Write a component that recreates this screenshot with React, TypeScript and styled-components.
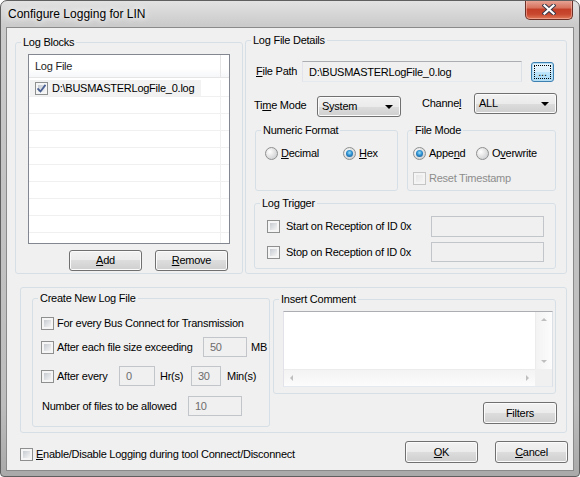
import React from "react";
import styled, { createGlobalStyle } from "styled-components";

const GlobalStyle = createGlobalStyle`
  html, body { margin: 0; padding: 0; background: #fff; }
  body {
    font-family: "Liberation Sans", Arial, sans-serif;
    font-size: 11px;
    letter-spacing: -0.25px;
    color: #000;
  }
  * { box-sizing: border-box; }
`;

const Window = styled.div`
  width: 580px;
  height: 477px;
  display: flex;
  flex-direction: column;
  border: 1px solid #5f5f5f;
  border-radius: 7px 7px 4px 4px;
  background: linear-gradient(#e2e2e2, #cbcbcb 24px, #c3c3c3 40%, #bdbdbd 85%, #a9a9a9);
  overflow: hidden;
`;

const TitleBar = styled.div`
  height: 26px;
  flex: none;
  display: flex;
  align-items: flex-start;
  padding-left: 7px;
`;

const Title = styled.div`
  flex: 1;
  align-self: center;
  font-size: 12px;
  letter-spacing: 0;
  text-shadow: 0 0 6px #fff, 0 0 10px #fff;
`;

const CloseButton = styled.div`
  width: 48px;
  height: 20px;
  margin: -1px 6px 0 0;
  border: 1px solid #6d3026;
  border-top: none;
  border-radius: 0 0 5px 5px;
  background: linear-gradient(#e9a99b, #d7745f 40%, #c43f27 50%, #c8472f 75%, #e07a58);
  box-shadow: inset 0 0 0 1px rgba(255, 200, 190, 0.5);
  display: flex;
  align-items: center;
  justify-content: center;
`;

const Client = styled.div`
  flex: 1;
  margin: 0 5px 5px;
  border: 1px solid #8a8a8a;
  background: #f0f0f0;
  display: flex;
  flex-direction: column;
`;

const TopRow = styled.div`
  display: flex;
  align-items: flex-start;
  gap: 2px;
  padding: 6px 0 0 8px;
`;

const Group = styled.fieldset<{ $w: number; $h: number; $mt?: number; $ml?: number }>`
  flex: none;
  width: ${(p) => p.$w}px;
  height: ${(p) => p.$h}px;
  margin: ${(p) => p.$mt ?? 0}px 0 0 ${(p) => p.$ml ?? 0}px;
  padding: 0;
  min-width: 0;
  border: 1px solid #d5dfe5;
  border-radius: 3px;
`;

const Caption = styled.legend`
  margin-left: 5px;
  padding: 0 2px;
  height: 13px;
  line-height: 13px;
`;

const Body = styled.div<{ $pt?: number; $pl?: number }>`
  display: flex;
  flex-direction: column;
  align-items: flex-start;
  padding: ${(p) => p.$pt ?? 0}px 0 0 ${(p) => p.$pl ?? 0}px;
`;

const Row = styled.div<{ $mt?: number; $h?: number; $center?: boolean }>`
  display: flex;
  align-items: ${(p) => (p.$center ? "center" : "flex-start")};
  margin-top: ${(p) => p.$mt ?? 0}px;
  height: ${(p) => (p.$h ? `${p.$h}px` : "auto")};
`;

const Label = styled.span<{ $w?: number; $ml?: number; $mt?: number; $disabled?: boolean }>`
  flex: none;
  width: ${(p) => (p.$w ? `${p.$w}px` : "auto")};
  margin-left: ${(p) => p.$ml ?? 0}px;
  margin-top: ${(p) => p.$mt ?? 0}px;
  line-height: 13px;
  white-space: nowrap;
  color: ${(p) => (p.$disabled ? "#8d8d8d" : "#000")};
`;

/* list view */
const ListView = styled.div`
  width: 202px;
  height: 190px;
  border: 1px solid #828790;
  background: #fff;
  overflow: hidden;
  display: flex;
  flex-direction: column;
`;

const ListHeader = styled.div`
  flex: none;
  height: 23px;
  display: flex;
  border-bottom: 1px solid #e5e5e5;
  background: linear-gradient(#fff 60%, #f6f7f9);
`;

const HeaderCell = styled.div`
  width: 192px;
  border-right: 1px solid #e5e5e5;
  padding-left: 6px;
  display: flex;
  align-items: center;
  color: #1e1e1e;
`;

const ListBody = styled.div`
  padding-top: 2px;
  display: flex;
  flex-direction: column;
`;

const ListRow = styled.div`
  flex: none;
  height: 17px;
  display: flex;
  border-bottom: 1px solid #f0f0f0;
`;

const ListCell = styled.div`
  width: 192px;
  border-right: 1px solid #f0f0f0;
  display: flex;
  align-items: stretch;
`;

const Item = styled.div`
  margin-left: 1px;
  padding: 0 7px 0 5px;
  display: flex;
  align-items: center;
  gap: 4px;
  background: #f2f2f2;
`;

/* controls */
const Button = styled.div<{ $w: number; $h?: number; $ml?: number; $mt?: number; $mr?: number; $focus?: boolean }>`
  flex: none;
  width: ${(p) => p.$w}px;
  height: ${(p) => p.$h ?? 21}px;
  margin: ${(p) => p.$mt ?? 0}px ${(p) => p.$mr ?? 0}px 0 ${(p) => p.$ml ?? 0}px;
  border: 1px solid ${(p) => (p.$focus ? "#3c7fb1" : "#707070")};
  border-radius: 3px;
  background: ${(p) =>
    p.$focus
      ? "linear-gradient(#eaf6fd, #d9f0fc 50%, #bee6fd 50%, #a7d9f5)"
      : "linear-gradient(#f2f2f2, #ebebeb 50%, #dddddd 50%, #cfcfcf)"};
  box-shadow: inset 0 0 0 1px ${(p) => (p.$focus ? "#b4dcf2" : "#fbfbfb")};
  display: flex;
  align-items: center;
  justify-content: center;
  padding: 2px;
`;

const PushRight = styled.div`
  margin-left: auto;
  display: flex;
`;

const FocusRect = styled.span`
  flex: 1;
  align-self: stretch;
  border: 1px dotted #000;
  display: flex;
  align-items: flex-end;
  justify-content: center;
  line-height: 12px;
`;

const Edit = styled.div<{ $w: number; $h?: number; $ml?: number; $mt?: number; $disabled?: boolean }>`
  flex: none;
  width: ${(p) => p.$w}px;
  height: ${(p) => p.$h ?? 20}px;
  margin-left: ${(p) => p.$ml ?? 0}px;
  margin-top: ${(p) => p.$mt ?? 0}px;
  border: 1px solid;
  border-color: ${(p) => (p.$disabled ? "#c2c6ca" : "#abadb3 #dbdfe6 #e3e9ef #e2e3ea")};
  background: #f0f0f0;
  color: ${(p) => (p.$disabled ? "#6d6d6d" : "#000")};
  display: flex;
  align-items: center;
  padding-left: 6px;
  white-space: nowrap;
`;

const Combo = styled.div<{ $w: number; $ml?: number; $mt?: number }>`
  flex: none;
  width: ${(p) => p.$w}px;
  height: 21px;
  margin-left: ${(p) => p.$ml ?? 0}px;
  margin-top: ${(p) => p.$mt ?? 0}px;
  border: 1px solid #707070;
  border-radius: 3px;
  background: linear-gradient(#f2f2f2, #ebebeb 50%, #dddddd 50%, #cfcfcf);
  box-shadow: inset 0 0 0 1px #fbfbfb;
  display: flex;
  align-items: center;
  justify-content: space-between;
  padding: 0 7px 0 4px;
`;

const Arrow = styled.span`
  width: 0;
  height: 0;
  border-left: 4px solid transparent;
  border-right: 4px solid transparent;
  border-top: 4px solid #000;
`;

const Check = styled.span<{ $disabled?: boolean }>`
  flex: none;
  width: 13px;
  height: 13px;
  border: 1px solid ${(p) => (p.$disabled ? "#c5c5c5" : "#8e8f8f")};
  padding: 2px;
  background: ${(p) =>
    p.$disabled
      ? "linear-gradient(135deg, #e6e6e6, #f4f4f4) content-box, #f4f4f4"
      : "linear-gradient(135deg, #c6cbd1, #f4f4f4) content-box, #f5f5f5"};
  display: flex;
  align-items: center;
  justify-content: center;
  position: relative;
`;

const CheckItem = styled.div<{ $w?: number; $ml?: number; $mt?: number }>`
  flex: none;
  display: flex;
  align-items: center;
  gap: 3px;
  width: ${(p) => (p.$w ? `${p.$w}px` : "auto")};
  margin-left: ${(p) => p.$ml ?? 0}px;
  margin-top: ${(p) => p.$mt ?? 0}px;
  white-space: nowrap;
`;

const Radio = styled.span<{ $on?: boolean }>`
  flex: none;
  width: 13px;
  height: 13px;
  border-radius: 50%;
  border: 1px solid #8e8f8f;
  background: radial-gradient(circle at 35% 35%, #ffffff, #e4e4e4 45%, #c3c6ca);
  display: flex;
  align-items: center;
  justify-content: center;
  &::after {
    content: "";
    display: ${(p) => (p.$on ? "block" : "none")};
    width: 7px;
    height: 7px;
    border-radius: 50%;
    background: radial-gradient(circle at 50% 40%, #9ee2fb, #2d8fd0 45%, #0c4c85);
  }
`;

const BottomFrame = styled.div`
  margin: 13px 0 0 13px;
  width: 547px;
  height: 146px;
  border: 1px solid #d5dfe5;
  border-radius: 3px;
  display: flex;
  align-items: flex-start;
`;

const Column = styled.div<{ $ml?: number; $mt?: number }>`
  display: flex;
  flex-direction: column;
  align-items: flex-end;
  margin-left: ${(p) => p.$ml ?? 0}px;
  margin-top: ${(p) => p.$mt ?? 0}px;
`;

const CommentBox = styled.div`
  width: 270px;
  height: 76px;
  border: 1px solid;
  border-color: #abadb3 #dbdfe6 #e3e9ef #e2e3ea;
  background: #fff;
  display: grid;
  grid-template-columns: 1fr 17px;
  grid-template-rows: 1fr 17px;
`;

const VScroll = styled.div`
  grid-column: 2;
  grid-row: 1;
  background: linear-gradient(90deg, #f3f3f3, #fcfcfc);
  border-left: 1px solid #ececec;
  display: flex;
  flex-direction: column;
  justify-content: space-between;
  align-items: center;
  padding: 6px 0;
`;

const HScroll = styled.div`
  grid-column: 1;
  grid-row: 2;
  background: linear-gradient(#f3f3f3, #fcfcfc);
  border-top: 1px solid #ececec;
  display: flex;
  justify-content: space-between;
  align-items: center;
  padding: 0 6px;
`;

const Corner = styled.div`
  grid-column: 2;
  grid-row: 2;
  background: #f0f0f0;
`;

const Tri = styled.span<{ $dir: "up" | "down" | "left" | "right" }>`
  width: 0;
  height: 0;
  border: 3px solid transparent;
  ${(p) =>
    p.$dir === "up"
      ? "border-bottom: 3px solid #bfbfbf; border-top-width: 0;"
      : p.$dir === "down"
      ? "border-top: 3px solid #bfbfbf; border-bottom-width: 0;"
      : p.$dir === "left"
      ? "border-right: 3px solid #bfbfbf; border-left-width: 0;"
      : "border-left: 3px solid #bfbfbf; border-right-width: 0;"}
`;

const BottomRow = styled.div`
  display: flex;
  align-items: flex-start;
  margin-top: 8px;
`;

const Tick = () => (
  <svg width="9" height="9" viewBox="0 0 9 9" style={{ position: "absolute" }}>
    <path d="M0.5 4.5 L3.5 7.5 L8.5 0.8" fill="none" stroke="#4a6092" strokeWidth="1.8" />
  </svg>
);

const CloseGlyph = () => (
  <svg width="14" height="11" viewBox="0 0 14 11">
    <path d="M2.5 1.5 L11.5 9.5 M11.5 1.5 L2.5 9.5" stroke="#3a3a4a" strokeWidth="4.2" strokeLinecap="square" />
    <path d="M2.5 1.5 L11.5 9.5 M11.5 1.5 L2.5 9.5" stroke="#fff" strokeWidth="2.2" strokeLinecap="square" />
  </svg>
);

const U = styled.span`
  text-decoration: underline;
`;

export default function App() {
  const rows = Array.from({ length: 10 }, (_, i) => i);
  return (
    <Window>
      <GlobalStyle />
      <TitleBar>
        <Title>Configure Logging for LIN</Title>
        <CloseButton>
          <CloseGlyph />
        </CloseButton>
      </TitleBar>
      <Client>
        <TopRow>
          <Group $w={228} $h={238} $mt={2}>
            <Caption>Log Blocks</Caption>
            <Body $pt={5} $pl={12}>
              <ListView>
                <ListHeader>
                  <HeaderCell>Log File</HeaderCell>
                </ListHeader>
                <ListBody>
                  {rows.map((i) => (
                    <ListRow key={i}>
                      <ListCell>
                        {i === 0 && (
                          <Item>
                            <Check>
                              <Tick />
                            </Check>
                            <Label>D:\BUSMASTERLogFile_0.log</Label>
                          </Item>
                        )}
                      </ListCell>
                    </ListRow>
                  ))}
                </ListBody>
              </ListView>
              <Row $mt={6}>
                <Button $w={73} $ml={41}>
                  <Label>
                    <U>A</U>dd
                  </Label>
                </Button>
                <Button $w={73} $ml={13}>
                  <Label>
                    <U>R</U>emove
                  </Label>
                </Button>
              </Row>
            </Body>
          </Group>

          <Group $w={322} $h={240}>
            <Caption>Log File Details</Caption>
            <Body>
              <Row $mt={14} $h={21} $center>
                <Label $w={46} $ml={10}>
                  <U>F</U>ile Path
                </Label>
                <Edit $w={220} $h={21}>
                  D:\BUSMASTERLogFile_0.log
                </Edit>
                <Button $w={23} $h={20} $ml={9} $mt={1} $focus>
                  <FocusRect>...</FocusRect>
                </Button>
              </Row>
              <Row $mt={11}>
                <Label $w={63} $ml={8} $mt={6}>
                  Ti<U>m</U>e Mode
                </Label>
                <Combo $w={84} $mt={3}>
                  <Label>System</Label>
                  <Arrow />
                </Combo>
                <Label $w={52} $ml={21} $mt={4}>
                  Channe<U>l</U>
                </Label>
                <Combo $w={83}>
                  <Label>ALL</Label>
                  <Arrow />
                </Combo>
              </Row>
              <Row $mt={7}>
                <Group $w={143} $h={67} $ml={9}>
                  <Caption>Numeric Format</Caption>
                  <Body $pt={10} $pl={9}>
                    <Row>
                      <CheckItem $w={78}>
                        <Radio />
                        <Label>
                          <U>D</U>ecimal
                        </Label>
                      </CheckItem>
                      <CheckItem>
                        <Radio $on />
                        <Label>
                          <U>H</U>ex
                        </Label>
                      </CheckItem>
                    </Row>
                  </Body>
                </Group>
                <Group $w={149} $h={67} $ml={9}>
                  <Caption>File Mode</Caption>
                  <Body $pt={10} $pl={5}>
                    <Row>
                      <CheckItem $w={63}>
                        <Radio $on />
                        <Label>
                          Appe<U>n</U>d
                        </Label>
                      </CheckItem>
                      <CheckItem>
                        <Radio />
                        <Label>
                          O<U>v</U>erwrite
                        </Label>
                      </CheckItem>
                    </Row>
                    <CheckItem $mt={12}>
                      <Check $disabled />
                      <Label $disabled>Reset Timestamp</Label>
                    </CheckItem>
                  </Body>
                </Group>
              </Row>
              <Group $w={302} $h={72} $mt={6} $ml={8}>
                <Caption>Log Trigger</Caption>
                <Body $pt={6} $pl={12}>
                  <Row $center>
                    <CheckItem $w={164}>
                      <Check />
                      <Label $ml={3}>Start on Reception of ID 0x</Label>
                    </CheckItem>
                    <Edit $w={113} $h={21} $disabled />
                  </Row>
                  <Row $center $mt={5}>
                    <CheckItem $w={164}>
                      <Check />
                      <Label $ml={3}>Stop on Reception of ID 0x</Label>
                    </CheckItem>
                    <Edit $w={113} $h={20} $disabled />
                  </Row>
                </Body>
              </Group>
            </Body>
          </Group>
        </TopRow>

        <BottomFrame>
          <Group $w={238} $h={135} $ml={11} $mt={4}>
            <Caption>Create New Log File</Caption>
            <Body $pt={8} $pl={8}>
              <Row $h={20} $center>
                <CheckItem>
                  <Check />
                  <Label>For every Bus Connect for Transmission</Label>
                </CheckItem>
              </Row>
              <Row $h={20} $center $mt={4}>
                <CheckItem $w={162}>
                  <Check />
                  <Label>After each file size exceeding</Label>
                </CheckItem>
                <Edit $w={44} $disabled>
                  50
                </Edit>
                <Label $ml={4}>MB</Label>
              </Row>
              <Row $h={20} $center $mt={9}>
                <CheckItem $w={78}>
                  <Check />
                  <Label>After every</Label>
                </CheckItem>
                <Edit $w={36} $disabled>
                  0
                </Edit>
                <Label $w={31} $ml={5}>
                  Hr(s)
                </Label>
                <Edit $w={30} $disabled>
                  30
                </Edit>
                <Label $ml={6}>Min(s)</Label>
              </Row>
              <Row $h={20} $center $mt={10}>
                <Label $w={146} $ml={1}>
                  Number of files to be allowed
                </Label>
                <Edit $w={54} $disabled>
                  10
                </Edit>
              </Row>
            </Body>
          </Group>
          <Column $ml={3} $mt={5}>
            <Group $w={283} $h={101}>
              <Caption>Insert Comment</Caption>
              <Body $pt={5} $pl={9}>
                <CommentBox>
                  <VScroll>
                    <Tri $dir="up" />
                    <Tri $dir="down" />
                  </VScroll>
                  <HScroll>
                    <Tri $dir="left" />
                    <Tri $dir="right" />
                  </HScroll>
                  <Corner />
                </CommentBox>
              </Body>
            </Group>
            <Button $w={74} $h={22} $mt={8} $mr={-1}>
              <Label>Filters</Label>
            </Button>
          </Column>
        </BottomFrame>

        <BottomRow>
          <CheckItem $ml={13} $mt={7}>
            <Check />
            <Label>
              <U>E</U>nable/Disable Logging during tool Connect/Disconnect
            </Label>
          </CheckItem>
          <PushRight>
            <Button $w={73} $h={22}>
              <Label>
                <U>O</U>K
              </Label>
            </Button>
            <Button $w={73} $h={22} $ml={17} $mr={5}>
              <Label>
                <U>C</U>ancel
              </Label>
            </Button>
          </PushRight>
        </BottomRow>
      </Client>
    </Window>
  );
}
